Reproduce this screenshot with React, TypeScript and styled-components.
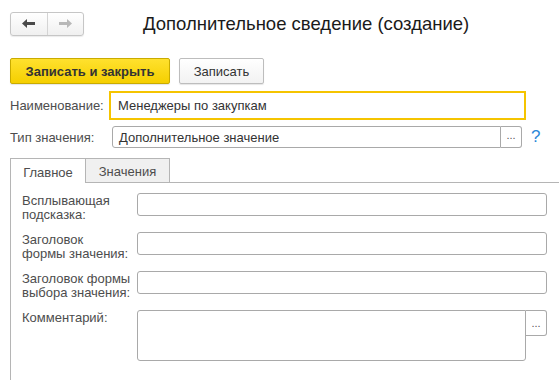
import React from 'react';
import styled, { createGlobalStyle } from 'styled-components';

const GlobalStyle = createGlobalStyle`
  html, body {
    margin: 0;
    padding: 0;
    background: #ffffff;
  }
  body {
    font-family: Arial, "Liberation Sans", sans-serif;
    font-size: 13px;
    color: #4d4d4d;
  }
`;

const Page = styled.div`
  width: 559px;
  height: 380px;
  overflow: hidden;
  display: flex;
  flex-direction: column;
  box-sizing: border-box;
  padding: 11px 0 0 10px;
`;

const Header = styled.div`
  display: flex;
  align-items: center;
  height: 25px;
`;

const NavGroup = styled.div`
  display: flex;
  width: 74px;
  height: 24px;
  box-sizing: border-box;
  border: 1px solid #c6c6c6;
  border-radius: 3px;
  background: linear-gradient(#ffffff, #f0f0f0);
  box-shadow: 0 1px 1px rgba(0, 0, 0, 0.08);
`;

const NavButton = styled.div<{ $divider?: boolean }>`
  flex: 1;
  display: flex;
  align-items: center;
  justify-content: center;
  border-right: ${p => (p.$divider ? '1px solid #d4d4d4' : 'none')};
`;

const Title = styled.div`
  margin-left: 59px;
  font-size: 18.5px;
  color: #1a1a1a;
  white-space: nowrap;
`;

const Toolbar = styled.div`
  display: flex;
  gap: 9px;
  margin-top: 22px;
`;

const Button = styled.div<{ $primary?: boolean; $width: number }>`
  width: ${p => p.$width}px;
  height: 26px;
  box-sizing: border-box;
  display: flex;
  align-items: center;
  justify-content: center;
  border-radius: 2px;
  font-size: 13px;
  font-weight: ${p => (p.$primary ? 'bold' : 'normal')};
  color: #333333;
  border: 1px solid ${p => (p.$primary ? '#c9ab00' : '#bdbdbd')};
  background: ${p => (p.$primary ? 'linear-gradient(#ffe12e, #f5cf00)' : 'linear-gradient(#ffffff, #f2f2f2)')};
  box-shadow: 0 1px 1px rgba(0, 0, 0, 0.1);
`;

const Row = styled.div<{ $top: number }>`
  display: flex;
  align-items: center;
  margin-top: ${p => p.$top}px;
`;

const Label = styled.div<{ $width: number }>`
  width: ${p => p.$width}px;
  flex-shrink: 0;
  color: #4d4d4d;
  white-space: nowrap;
`;

const Field = styled.div<{ $width: number; $height: number; $focused?: boolean; $joined?: boolean }>`
  width: ${p => p.$width}px;
  height: ${p => p.$height}px;
  box-sizing: border-box;
  border: ${p => (p.$focused ? '2px solid #f5c400' : '1px solid #a9a9a9')};
  border-radius: ${p => (p.$focused ? '0' : p.$joined ? '3px 0 0 3px' : '3px')};
  display: flex;
  align-items: center;
  padding-left: ${p => (p.$focused ? '7px' : '6px')};
  color: #333333;
  background: #ffffff;
`;

const PickButton = styled.div<{ $height: number }>`
  width: 21px;
  height: ${p => p.$height}px;
  box-sizing: border-box;
  border: 1px solid #a9a9a9;
  border-left: none;
  border-radius: 0 3px 3px 0;
  display: flex;
  align-items: flex-end;
  justify-content: center;
  padding-bottom: 6px;
  font-size: 11px;
  line-height: 1;
  color: #555555;
  background: #ffffff;
`;

const Help = styled.div`
  margin-left: 9px;
  font-size: 17px;
  color: #2b88d8;
`;

const Tabs = styled.div`
  display: flex;
  margin-top: 10px;
  height: 25px;
`;

const Tab = styled.div<{ $active?: boolean; $width: number }>`
  width: ${p => p.$width}px;
  box-sizing: border-box;
  display: flex;
  align-items: center;
  justify-content: center;
  border: 1px solid #b5b5b5;
  border-left: ${p => (p.$active ? '1px solid #b5b5b5' : 'none')};
  border-bottom: ${p => (p.$active ? 'none' : '1px solid #b5b5b5')};
  background: ${p => (p.$active ? '#ffffff' : '#f0f0f0')};
  color: #4d4d4d;
  padding-top: 2px;
`;

const TabFill = styled.div`
  flex: 1;
  border-bottom: 1px solid #b5b5b5;
`;

const Panel = styled.div`
  flex: 1;
  border-left: 1px solid #b5b5b5;
  padding: 10px 0 0 11px;
  display: flex;
  flex-direction: column;
  gap: 10px;
`;

const PanelRow = styled.div`
  display: flex;
  align-items: flex-start;
  min-height: 29px;
`;

const PanelLabel = styled.div`
  width: 115px;
  flex-shrink: 0;
  line-height: 14px;
  margin-top: 1px;
  color: #4d4d4d;
`;

const ArrowIcon: React.FC<{ dir: 'left' | 'right'; color: string }> = ({ dir, color }) => (
  <svg width="13" height="9" viewBox="0 0 13 9" style={{ transform: dir === 'right' ? 'scaleX(-1)' : undefined }}>
    <path d="M0 4.5 L5 0 L5 3 L13 3 L13 6 L5 6 L5 9 Z" fill={color} />
  </svg>
);

const fields = [
  { label: ['Всплывающая', 'подсказка:'] },
  { label: ['Заголовок', 'формы значения:'] },
  { label: ['Заголовок формы', 'выбора значения:'] },
];

export default function App() {
  return (
    <>
      <GlobalStyle />
      <Page>
        <Header>
          <NavGroup>
            <NavButton $divider>
              <ArrowIcon dir="left" color="#4a4a4a" />
            </NavButton>
            <NavButton>
              <ArrowIcon dir="right" color="#b8b8b8" />
            </NavButton>
          </NavGroup>
          <Title>Дополнительное сведение (создание)</Title>
        </Header>

        <Toolbar>
          <Button $primary $width={160}>Записать и закрыть</Button>
          <Button $width={85}>Записать</Button>
        </Toolbar>

        <Row $top={7}>
          <Label $width={99}>Наименование:</Label>
          <Field $width={417} $height={29} $focused>Менеджеры по закупкам</Field>
        </Row>

        <Row $top={6}>
          <Label $width={102}>Тип значения:</Label>
          <Field $width={389} $height={22} $joined>Дополнительное значение</Field>
          <PickButton $height={22}>...</PickButton>
          <Help>?</Help>
        </Row>

        <Tabs>
          <Tab $active $width={76}>Главное</Tab>
          <Tab $width={84}>Значения</Tab>
          <TabFill />
        </Tabs>

        <Panel>
          {fields.map(f => (
            <PanelRow key={f.label.join(' ')}>
              <PanelLabel>
                {f.label[0]}
                <br />
                {f.label[1]}
              </PanelLabel>
              <Field $width={410} $height={23} />
            </PanelRow>
          ))}
          <PanelRow>
            <PanelLabel>Комментарий:</PanelLabel>
            <Field $width={389} $height={51} $joined style={{ borderRadius: '3px 0 3px 3px' }} />
            <PickButton $height={26}>...</PickButton>
          </PanelRow>
        </Panel>
      </Page>
    </>
  );
}
